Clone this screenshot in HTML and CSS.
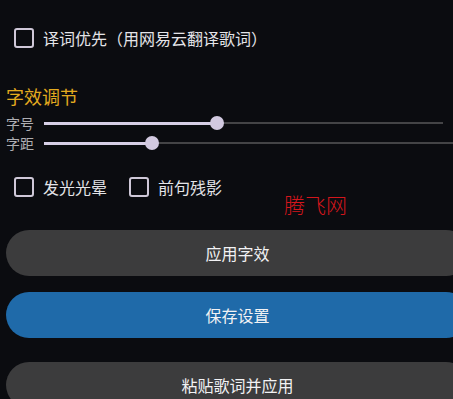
FILE: index.html
```html
<!DOCTYPE html>
<html lang="zh">
<head>
<meta charset="utf-8">
<link rel="stylesheet" href="styles.css">
</head>
<body>
<div class="page">
  <label class="check-row first">
    <span class="box"></span>
    <span class="check-text">译词优先（用网易云翻译歌词）</span>
  </label>

  <h2 class="heading">字效调节</h2>

  <div class="slider-row">
    <span class="slider-label">字号</span>
    <div class="track track-a">
      <div class="fill" style="width:173px"></div>
      <div class="thumb" style="left:173px"></div>
    </div>
  </div>
  <div class="slider-row">
    <span class="slider-label">字距</span>
    <div class="track track-b">
      <div class="fill" style="width:108px"></div>
      <div class="thumb" style="left:108px"></div>
    </div>
  </div>

  <div class="check-group">
    <label class="check-row">
      <span class="box"></span>
      <span class="check-text">发光光晕</span>
    </label>
    <label class="check-row">
      <span class="box"></span>
      <span class="check-text">前句残影</span>
    </label>
  </div>

  <div class="watermark">腾飞网</div>

  <div class="buttons">
    <button class="btn btn-grey">应用字效</button>
    <button class="btn btn-blue">保存设置</button>
    <button class="btn btn-grey last">粘贴歌词并应用</button>
  </div>
</div>
</body>
</html>
```

FILE: styles.css
```css
html, body {
  margin: 0;
  padding: 0;
  background: #0b0c10;
  overflow: hidden;
  height: 399px;
}
body {
  font-family: "Noto Sans CJK SC", "Noto Sans", sans-serif;
  color: #e2e2e6;
}
.page {
  position: relative;
  padding: 28px 0 0 6px;
  width: 463px;
}
.check-row {
  display: flex;
  align-items: center;
  gap: 9px;
  height: 20px;
  margin-left: 8px;
}
.box {
  box-sizing: border-box;
  width: 20px;
  height: 20px;
  border: 2px solid #cfc8d8;
  border-radius: 3px;
  flex: none;
}
.check-text {
  font-size: 16px;
  line-height: 20px;
  color: #e4e4e8;
}
.heading {
  margin: 36px 0 5px 0;
  font-size: 18px;
  line-height: 24px;
  font-weight: normal;
  color: #e4ab1f;
}
.slider-row {
  display: flex;
  align-items: center;
  height: 20px;
}
.slider-label {
  width: 38px;
  flex: none;
  font-size: 14px;
  line-height: 20px;
  color: #aeaeb2;
}
.track {
  position: relative;
  height: 2px;
  background: #444446;
}
.track-a { width: 399px; }
.track-b { width: 420px; }
.fill {
  position: absolute;
  left: 0;
  top: -0.5px;
  height: 3px;
  background: #d7cfe6;
}
.thumb {
  position: absolute;
  top: 1px;
  width: 14px;
  height: 14px;
  margin: -7px 0 0 -7px;
  border-radius: 50%;
  background: #d2c9e0;
}
.check-group {
  display: flex;
  gap: 22px;
  margin-top: 24px;
}
.check-group .check-row {
  margin-left: 8px;
}
.check-group .check-row + .check-row {
  margin-left: 0;
}
.watermark {
  position: absolute;
  left: 284px;
  top: 192px;
  font-size: 21px;
  line-height: 24px;
  color: #d4161c;
  font-weight: 300;
}
.buttons {
  display: flex;
  flex-direction: column;
  gap: 16px;
  margin-top: 33px;
}
.btn {
  width: 463px;
  height: 46px;
  border: none;
  border-radius: 23px;
  font-family: "Noto Sans CJK SC", "Noto Sans", sans-serif;
  font-size: 16px;
  color: #f2f2f4;
  padding: 0;
}
.btn-grey { background: #3c3c3d; }
.btn-blue { background: #1f6aa9; }
.btn.last { margin-top: 8px; }
```
